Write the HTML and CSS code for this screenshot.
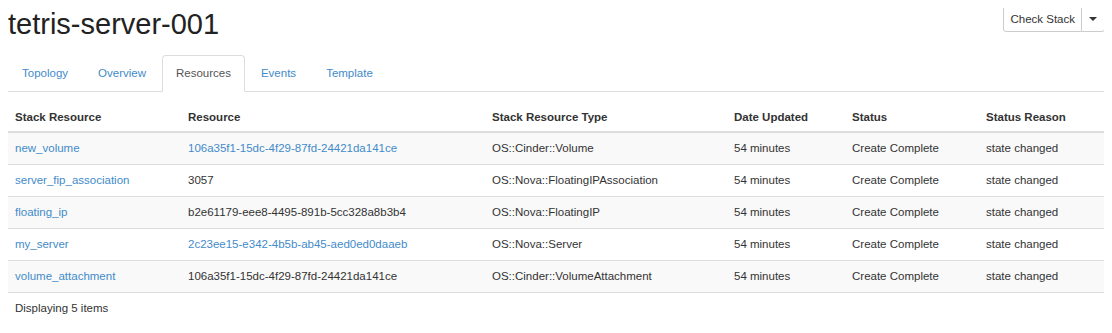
FILE: index.html
```html
<!DOCTYPE html>
<html lang="en">
<head>
    <meta charset="UTF-8">
    <title>tetris-server-001</title>
    <link rel="stylesheet" href="styles.css">
</head>
<body>
    <div class="page-header">
        <h1>tetris-server-001</h1>
        <div class="btn-group">
            <button class="btn">Check Stack</button>
            <button class="btn btn-caret"><span class="caret"></span></button>
        </div>
    </div>

    <ul class="nav-tabs">
        <li><a href="#">Topology</a></li>
        <li><a href="#">Overview</a></li>
        <li class="active"><a href="#">Resources</a></li>
        <li><a href="#">Events</a></li>
        <li><a href="#">Template</a></li>
    </ul>

    <div class="tab-content">
        <table class="table">
            <colgroup>
                <col class="c1"><col class="c2"><col class="c3">
                <col class="c4"><col class="c5"><col class="c6">
            </colgroup>
            <thead>
                <tr>
                    <th>Stack Resource</th>
                    <th>Resource</th>
                    <th>Stack Resource Type</th>
                    <th>Date Updated</th>
                    <th>Status</th>
                    <th>Status Reason</th>
                </tr>
            </thead>
            <tbody>
                <tr>
                    <td><a href="#">new_volume</a></td>
                    <td><a href="#">106a35f1-15dc-4f29-87fd-24421da141ce</a></td>
                    <td>OS::Cinder::Volume</td>
                    <td>54 minutes</td>
                    <td>Create Complete</td>
                    <td>state changed</td>
                </tr>
                <tr>
                    <td><a href="#">server_fip_association</a></td>
                    <td>3057</td>
                    <td>OS::Nova::FloatingIPAssociation</td>
                    <td>54 minutes</td>
                    <td>Create Complete</td>
                    <td>state changed</td>
                </tr>
                <tr>
                    <td><a href="#">floating_ip</a></td>
                    <td>b2e61179-eee8-4495-891b-5cc328a8b3b4</td>
                    <td>OS::Nova::FloatingIP</td>
                    <td>54 minutes</td>
                    <td>Create Complete</td>
                    <td>state changed</td>
                </tr>
                <tr>
                    <td><a href="#">my_server</a></td>
                    <td><a href="#">2c23ee15-e342-4b5b-ab45-aed0ed0daaeb</a></td>
                    <td>OS::Nova::Server</td>
                    <td>54 minutes</td>
                    <td>Create Complete</td>
                    <td>state changed</td>
                </tr>
                <tr>
                    <td><a href="#">volume_attachment</a></td>
                    <td>106a35f1-15dc-4f29-87fd-24421da141ce</td>
                    <td>OS::Cinder::VolumeAttachment</td>
                    <td>54 minutes</td>
                    <td>Create Complete</td>
                    <td>state changed</td>
                </tr>
            </tbody>
            <tfoot>
                <tr>
                    <td colspan="6">Displaying 5 items</td>
                </tr>
            </tfoot>
        </table>
    </div>
</body>
</html>
```

FILE: styles.css
```css
* {
    box-sizing: border-box;
}

body {
    margin: 8px;
    font-family: 'Liberation Sans', Arial, sans-serif;
    font-size: 11.5px;
    line-height: 15px;
    color: #333;
    background: white;
}

a {
    color: #428bca;
    text-decoration: none;
}

.page-header {
    display: flex;
    justify-content: space-between;
    align-items: flex-start;
}

.page-header h1 {
    margin: 0;
    font-size: 29px;
    line-height: 32px;
    font-weight: normal;
    color: #222;
}

.btn-group {
    display: flex;
    margin-top: -2px;
    margin-right: -1px;
}

.btn {
    font-family: inherit;
    font-size: 11.5px;
    line-height: 15px;
    color: #333;
    background: white;
    border: 1px solid #ccc;
    border-radius: 3px 0 0 3px;
    padding: 5px 6px 4px;
    height: 26px;
    white-space: nowrap;
}

.btn-caret {
    width: 24px;
    margin-left: -1px;
    border-radius: 0 3px 3px 0;
    padding: 0;
    display: flex;
    align-items: center;
    justify-content: center;
}

.caret {
    width: 0;
    height: 0;
    border-top: 4px solid #333;
    border-left: 4px solid transparent;
    border-right: 4px solid transparent;
}

.nav-tabs {
    list-style: none;
    margin: 15px 0 0;
    padding: 0;
    display: flex;
    border-bottom: 1px solid #ddd;
}

.nav-tabs li {
    margin-right: 2px;
    margin-bottom: -1px;
}

.nav-tabs a {
    display: block;
    padding: 10px 13px;
    border: 1px solid transparent;
    border-radius: 4px 4px 0 0;
}

.nav-tabs .active a {
    color: #555;
    background: white;
    border-color: #ddd #ddd transparent;
}

.tab-content {
    margin-top: 8px;
}

.table {
    width: 100%;
    border-collapse: collapse;
    table-layout: fixed;
}

.c1 { width: 173px; }
.c2 { width: 304px; }
.c3 { width: 242px; }
.c4 { width: 118px; }
.c5 { width: 134px; }
.c6 { width: 125px; }

.table th,
.table td {
    padding: 8px 7px;
    text-align: left;
    white-space: nowrap;
    overflow: hidden;
}

.table th {
    font-weight: bold;
    padding: 10px 7px 6px;
    border-bottom: 2px solid #ddd;
}

.table tbody td {
    border-bottom: 1px solid #ddd;
}

.table tbody tr:nth-child(odd) td {
    background: #f9f9f9;
}
```
